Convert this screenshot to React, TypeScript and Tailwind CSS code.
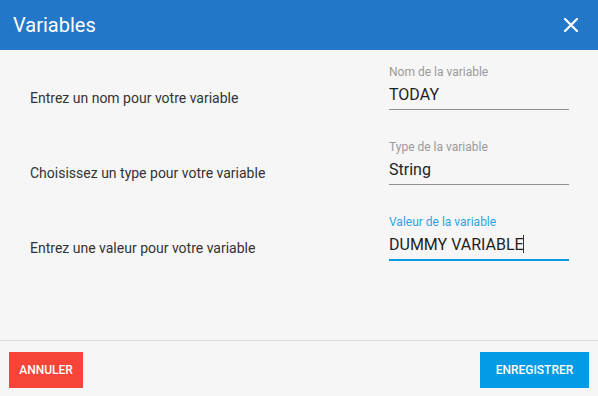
// ── Variables dialog ─────────────────────────────────────────
type Field = {
    prompt: string;
    label: string;
    value: string;
    focused?: boolean;
};

const FIELDS: Field[] = [
    { prompt: 'Entrez un nom pour votre variable', label: 'Nom de la variable', value: 'TODAY' },
    { prompt: 'Choisissez un type pour votre variable', label: 'Type de la variable', value: 'String' },
    { prompt: 'Entrez une valeur pour votre variable', label: 'Valeur de la variable', value: 'DUMMY VARIABLE', focused: true },
];

// ── One row: prompt on the left, floating-label input on the right ──
function FieldRow({ field }: { field: Field }) {
    return (
        <div className="flex items-start justify-between">
            <p className="mt-[24px] text-[14px] leading-[20px] text-[#333333]">{field.prompt}</p>
            <div className="w-[180px]">
                <div
                    className={`text-[12px] leading-[16px] ${field.focused ? 'text-[#2ba3e8]' : 'text-[#9a9a9a]'}`}
                >
                    {field.label}
                </div>
                <div
                    className={`pt-[3px] pb-[2px] text-[16px] leading-[24px] text-[#1f1f1f] ${
                        field.focused ? 'border-b-2 border-[#0a9be3]' : 'border-b border-[#8f8f8f]'
                    }`}
                >
                    {field.value}
                    {field.focused && (
                        <span className="inline-block w-px h-[18px] -ml-[1px] align-[-3px] bg-[#333333]" />
                    )}
                </div>
            </div>
        </div>
    );
}

export default function App() {
    return (
        <div className="w-[598px] h-[396px] flex flex-col bg-[#f6f6f6] font-['Roboto',sans-serif]">
            {/* Header */}
            <div className="h-[50px] shrink-0 flex items-center justify-between pl-[13px] pr-[20px] bg-[#2277c9]">
                <h2 className="text-[20px] leading-[24px] text-white">Variables</h2>
                <svg width="14" height="14" viewBox="0 0 14 14" className="text-white">
                    <path d="M1 1 L13 13 M13 1 L1 13" stroke="currentColor" strokeWidth="2.2" strokeLinecap="square" />
                </svg>
            </div>

            {/* Body */}
            <div className="flex-1 flex flex-col gap-[29px] pt-[14px] pl-[30px] pr-[29px]">
                {FIELDS.map((f) => (
                    <FieldRow key={f.label} field={f} />
                ))}
            </div>

            {/* Footer */}
            <div className="shrink-0 flex items-start justify-between border-t border-[#dcdce2] pt-[11px] pb-[8px] px-[9px]">
                <button className="w-[74px] h-[36px] bg-[#f64438] text-white text-[12px] font-medium">
                    ANNULER
                </button>
                <button className="w-[109px] h-[36px] bg-[#039be5] text-white text-[12px] font-medium">
                    ENREGISTRER
                </button>
            </div>
        </div>
    );
}
